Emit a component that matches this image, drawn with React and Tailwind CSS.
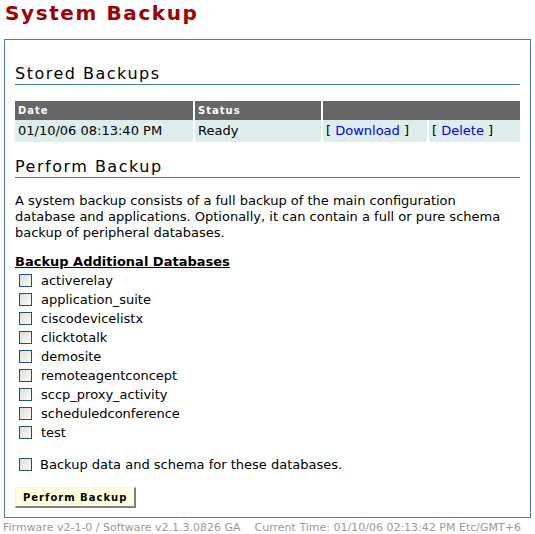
import React from 'react';

const databases = [
  'activerelay',
  'application_suite',
  'ciscodevicelistx',
  'clicktotalk',
  'demosite',
  'remoteagentconcept',
  'sccp_proxy_activity',
  'scheduledconference',
  'test',
];

function Box() {
  return (
    <span className="inline-block w-[13px] h-[13px] border border-[#1c5180] bg-gradient-to-br from-[#dcdcd7] to-[#fbfbf9] shrink-0" />
  );
}

function Heading({ children }) {
  return (
    <div className="border-b border-[#4a76c0] text-[16px] leading-[19px] tracking-[1.5px] text-black pb-[1px]">
      {children}
    </div>
  );
}

export default function App() {
  return (
    <div className="w-[535px] h-[534px] bg-white font-['DejaVu_Sans',Verdana,sans-serif] text-black overflow-hidden">
      <h1 className="pl-[5px] pt-[1px] h-[39px] text-[20px] leading-[24px] font-bold tracking-[1.6px] text-[#a00000]">
        System Backup
      </h1>

      <div className="ml-[4px] w-[527px] h-[479px] border border-[#4a76c0] px-[10px]">
        <div className="pt-[24px]">
          <Heading>Stored Backups</Heading>
        </div>

        <table className="mt-[16px] w-[505px] border-collapse text-[13px]">
          <thead>
            <tr className="bg-[#666666] text-white text-[10px] font-bold tracking-[1px] h-[19px]">
              <td className="w-[179px] px-[3px] border-r-2 border-white">Date</td>
              <td className="w-[128px] px-[3px] border-r-2 border-white">Status</td>
              <td colSpan={2}></td>
            </tr>
          </thead>
          <tbody>
            <tr className="bg-[#ddeded] h-[22px]">
              <td className="px-[3px] border-r-2 border-white">01/10/06 08:13:40 PM</td>
              <td className="px-[3px] border-r-2 border-white">Ready</td>
              <td className="w-[106px] px-[3px] border-r-2 border-white">
                [ <span className="text-[#0000ee]">Download</span> ]
              </td>
              <td className="px-[3px]">
                [ <span className="text-[#0000ee]">Delete</span> ]
              </td>
            </tr>
          </tbody>
        </table>

        <div className="mt-[15px]">
          <Heading>Perform Backup</Heading>
        </div>

        <p className="mt-[15px] text-[13px] leading-[16px]">
          A system backup consists of a full backup of the main configuration database and applications. Optionally, it can contain a full or pure schema backup of peripheral databases.
        </p>

        <div className="mt-[13px] text-[13px] leading-[16px] font-bold underline">
          Backup Additional Databases
        </div>

        <div className="mt-[1px] flex flex-col">
          {databases.map((d) => (
            <label key={d} className="flex items-center h-[19px] pl-[4px] gap-[9px] text-[13px]">
              <Box />
              <span>{d}</span>
            </label>
          ))}
        </div>

        <label className="mt-[13px] flex items-center h-[19px] pl-[4px] gap-[8px] text-[13px]">
          <Box />
          <span>Backup data and schema for these databases.</span>
        </label>

        <button className="mt-[13px] h-[21px] px-[7px] bg-[#ffffe0] border border-t-[#f4f4e8] border-l-[#f4f4e8] border-r-[#808080] border-b-[#808080] border-r-2 border-b-2 text-[10px] font-bold tracking-[1px]">
          Perform Backup
        </button>
      </div>

      <div className="pl-[3px] pt-[3px] flex gap-[14px] text-[11px] leading-[13px] text-[#9a9a9a] whitespace-nowrap">
        <span>Firmware v2-1-0 / Software v2.1.3.0826 GA</span>
        <span>Current Time: 01/10/06 02:13:42 PM Etc/GMT+6</span>
      </div>
    </div>
  );
}
